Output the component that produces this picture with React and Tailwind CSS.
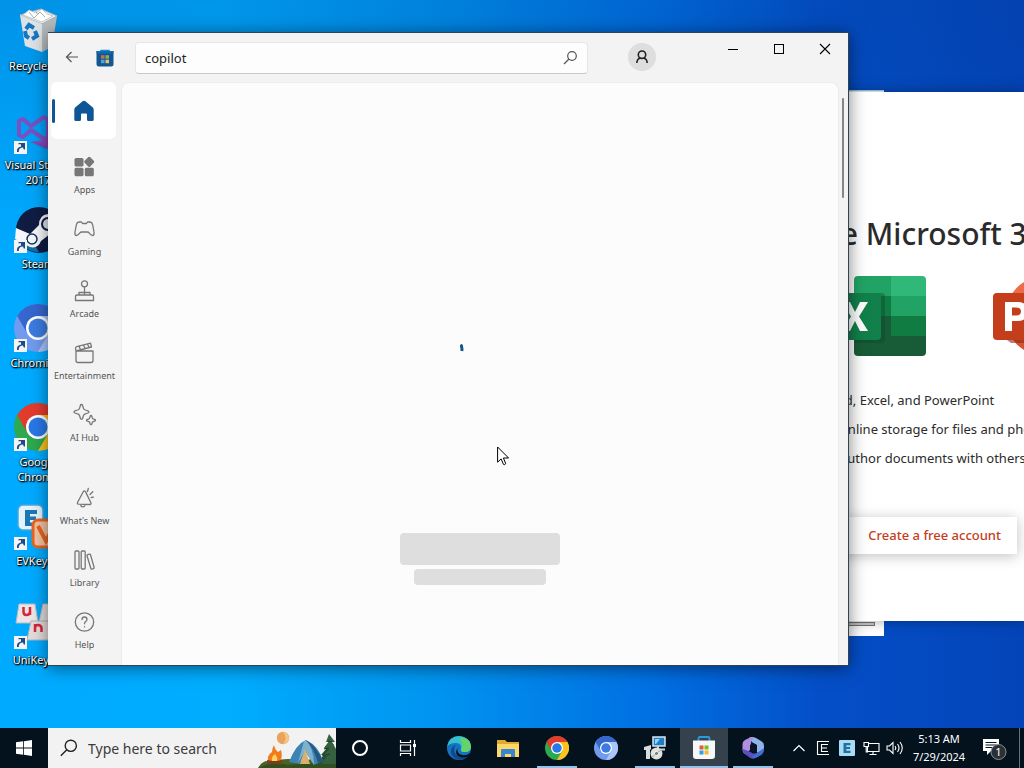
import React from "react";

const noto = "font-['Noto_Sans','Open_Sans',sans-serif]";

/* ---------- Desktop icons ---------- */

function Shortcut() {
  return (
    <svg className="absolute bottom-0 left-0 size-[13px]" viewBox="0 0 13 13" aria-hidden="true">
      <rect width="13" height="13" fill="#f4f4f4" />
      <path d="M3 11C2.600 8 4 6 7 5.500V3.200H4.500V2H11v6.500H9.800L9 6.500C6 6.500 4.500 8 4.800 11z" fill="#1c4a8c" />
    </svg>
  );
}

function RecycleArt() {
  return (
    <svg viewBox="0 0 48 48" className="size-12">
      <path d="M6 8l21-6 16 7-15 8z" fill="#eef1f3" stroke="#a9b0b5" />
      <path d="M6 8l22 9v28L11 39z" fill="#dfe2e4" />
      <path d="M28 17l15-8-5 31-10 5z" fill="#b5babd" />
      <path d="M9 8l6-5 7 3 6-4 5 5 6 2-11 6z" fill="#fff" stroke="#b8bec2" strokeWidth=".8" />
      <path d="M15 5l5 6 6-6 5 5M21 3l3 5" stroke="#a9aeb3" fill="none" />
      <g fill="none" stroke="#1676c6" strokeWidth="4">
        <path d="M12 22l3-4 5 3" />
        <path d="M21 24l2 5-5 3" />
        <path d="M15 31l-3-2-1-5" />
      </g>
    </svg>
  );
}

function VisualStudioArt() {
  return (
    <svg viewBox="0 0 48 48" className="size-12">
      <path d="M34 8l9 3v28l-11 4-15-7 15 1z" fill="#7a3dac" opacity=".8" />
      <path d="M5 15l4-2 8 7 13-9 4 3v16l-4 3-13-9-8 7-4-2z" fill="none" stroke="#8f42b8" strokeWidth="4" strokeLinejoin="round" opacity=".85" />
      <path d="M16 36l20-3v8z" fill="#9b3cb5" opacity=".8" />
    </svg>
  );
}

function SteamArt() {
  return (
    <svg viewBox="0 0 48 48" className="size-12">
      <circle cx="25" cy="25" r="23" fill="#101c42" />
      <path d="M2 27q12 1 23 20-18 0-23-20z" fill="#1470a7" />
      <path d="M2 23l14 6 9-9q0-10 9-11a10 10 0 0 1 2 20l-9 7q-3 8-11 6L1 34z" fill="#f5f7fa" />
      <circle cx="34" cy="19" r="7" fill="#101c42" />
      <circle cx="34" cy="19" r="5" fill="#dfe5ec" />
      <circle cx="18" cy="34" r="5" fill="none" stroke="#15345d" strokeWidth="1.500" />
    </svg>
  );
}

function ChromeArt({ blue = false, className = "size-12" }) {
  const top = blue ? "#3567cf" : "#e33b2e";
  const left = blue ? "#719bee" : "#2da94f";
  const right = blue ? "#a9c6fb" : "#fcc31e";
  return (
    <svg viewBox="0 0 48 48" className={className} aria-hidden="true">
      <circle cx="24" cy="24" r="24" fill={left} />
      <path d="M3.200 12A24 24 0 0 1 44.800 12H24L13.600 30z" fill={top} />
      <path d="M44.800 12A24 24 0 0 1 24 48L34.400 30 24 12z" fill={right} />
      <circle cx="24" cy="24" r="12" fill="#fff" />
      <circle cx="24" cy="24" r="9.500" fill={blue ? "#3c7be0" : "#2978e8"} />
    </svg>
  );
}

function EvkeyArt() {
  return (
    <svg viewBox="0 0 48 48" className="size-12">
      <rect x="4" y="3" width="25" height="25" rx="5" fill="#e2f3fc" stroke="#4aa6dc" strokeWidth="1.500" />
      <path d="M11 8h12v4h-7v2.500h6v3.500h-6v2.500h7V24H11z" fill="#1c77b5" />
      <rect x="19" y="18" width="27" height="27" rx="5" fill="#f4c3a3" stroke="#e8651e" strokeWidth="3" />
      <path d="M24 24l8 15 8-15" fill="none" stroke="#e8651e" strokeWidth="4" />
    </svg>
  );
}

function UnikeyArt() {
  return (
    <svg viewBox="0 0 48 48" className="size-12">
      <path d="M5 3h16l3 19H2z" fill="#ece6e6" stroke="#bdbabd" />
      <path d="M29 3h14l3 19H25z" fill="#e2dcdc" stroke="#bdbabd" />
      <path d="M17 20h17l4 19H13z" fill="#e3dcdc" stroke="#b5b0b3" />
      <path d="M9.500 6v5q0 3 3 3t3.500-3V6M16 6v8" fill="none" stroke="#d92538" strokeWidth="2.500" />
      <path d="M21 31v-8M21 27q0-3 3-3t3.500 3v4" fill="none" stroke="#d92538" strokeWidth="2.500" />
    </svg>
  );
}

const desktopItems = [
  { label: "Recycle Bin", art: <RecycleArt />, shortcut: false },
  { label: "Visual Studio 2017", art: <VisualStudioArt />, shortcut: true },
  { label: "Steam", art: <SteamArt />, shortcut: true },
  { label: "Chromium", art: <ChromeArt blue />, shortcut: true },
  { label: "Google Chrome", art: <ChromeArt />, shortcut: true },
  { label: "EVKey64", art: <EvkeyArt />, shortcut: true },
  { label: "UniKeyNT", art: <UnikeyArt />, shortcut: true },
];

function DesktopIcons() {
  return (
    <ul className="flex w-[76px] flex-col pt-[7px]">
      {desktopItems.map((item) => (
        <li key={item.label} className="h-[99px]">
          <button className="flex w-full flex-col items-center gap-[3px]">
            <span className="relative block size-12">
              {item.art}
              {item.shortcut && <Shortcut />}
            </span>
            <span className="text-center text-[11px] leading-[15px] text-white [text-shadow:1px_1px_2px_#000,0_0_2px_#000,1px_1px_1px_#000]">
              {item.label}
            </span>
          </button>
        </li>
      ))}
    </ul>
  );
}

/* ---------- Microsoft 365 window ---------- */

function ExcelLogo() {
  return (
    <svg viewBox="0 0 92 80" className="h-20 w-[92px] shrink-0" role="img" aria-label="Excel">
      <defs>
        <clipPath id="sheet"><rect x="20" width="72" height="80" rx="4" /></clipPath>
      </defs>
      <g clipPath="url(#sheet)">
        <rect x="20" width="37" height="20" fill="#21a366" />
        <rect x="57" width="35" height="20" fill="#2fb878" />
        <rect x="20" y="20" width="37" height="20" fill="#107c41" />
        <rect x="57" y="20" width="35" height="20" fill="#21a366" />
        <rect x="20" y="40" width="37" height="40" fill="#185c37" />
        <rect x="57" y="40" width="35" height="20" fill="#107c41" />
        <rect x="57" y="60" width="35" height="20" fill="#185c37" />
        <path d="M20 17h28q3 0 3 3v43q0 4-4 4H20z" fill="#0b4327" opacity=".35" />
      </g>
      <rect y="17" width="47" height="47" rx="4" fill="#12804a" />
      <path d="M8 26h8l5 10 5-10h8L25 40.500 34 55h-8l-5-10-5 10H8l9-14.500z" fill="#fff" />
    </svg>
  );
}

function PowerPointLogo() {
  return (
    <svg viewBox="0 0 92 80" className="h-20 w-[92px] shrink-0" role="img" aria-label="PowerPoint">
      <path d="M52 0a40 40 0 0 0-40 40h40z" fill="#ed6c47" />
      <path d="M52 0a40 40 0 0 1 40 40H52z" fill="#ff8f6b" />
      <path d="M12 40a40 40 0 0 0 80 0z" fill="#d35230" />
      <path d="M14 64h30q5-1 5-5V20h3v42q0 5-5 5H18z" fill="#8f2c12" opacity=".6" />
      <rect y="17" width="47" height="47" rx="4" fill="#c43e1c" />
      <path fillRule="evenodd" d="M12 26h12q11 0 11 9.500T24 45h-5v10h-7zm7 5.500v8h4q5 0 5-4t-5-4z" fill="#fff" />
    </svg>
  );
}

function OfficeWindow() {
  return (
    <section className="absolute top-[92px] right-0 bottom-[107px] flex w-[204px] flex-col overflow-hidden bg-white text-[#2b2b2b] shadow-[0_0_12px_rgba(0,0,0,0.35)]">
      <h1 className="mt-[122px] pl-0.5 text-[30px] leading-10 font-medium whitespace-nowrap">
        ne Microsoft 365
      </h1>
      <div className="mt-[22px] flex gap-[67px] pl-[14px]">
        <ExcelLogo />
        <PowerPointLogo />
      </div>
      <ul className="mt-[30px] text-[13px] leading-[29px] whitespace-nowrap">
        <li>Word, Excel, and PowerPoint</li>
        <li className="pl-5">online storage for files and photos</li>
        <li className="pl-5">author documents with others</li>
      </ul>
      <button className="mt-11 mr-[7px] h-[37px] shrink-0 bg-white pr-4 text-right text-[13px] font-medium text-[#c43e1c] shadow-[0_2px_14px_rgba(0,0,0,0.25)]">
        Create a free account
      </button>
    </section>
  );
}

/* ---------- Store window ---------- */

function NavSvg({ children }) {
  return (
    <svg viewBox="0 0 24 24" className="size-6" fill="none" stroke="#777" strokeWidth="1.300" strokeLinejoin="round" strokeLinecap="round" aria-hidden="true">
      {children}
    </svg>
  );
}

const topNav = [
  {
    label: "Apps",
    icon: (
      <NavSvg>
        <g fill="#777" stroke="none">
          <rect x="1.500" y="3" width="9" height="8.500" rx="1.500" />
          <rect x="1.500" y="12.800" width="9" height="8.500" rx="1.500" />
          <rect x="11.800" y="12.800" width="9" height="8.500" rx="1.500" />
          <rect x="12.200" y="2.800" width="8" height="8" rx="1.500" transform="rotate(45 16.200 6.800)" />
        </g>
      </NavSvg>
    ),
  },
  {
    label: "Gaming",
    icon: (
      <NavSvg>
        <path d="M6.200 5h2.300l1 1.500h4l1-1.500h2.300q2.200.2 2.800 2.500L21 15q.4 3.500-1.500 3.500-1.400 0-3.400-2.700-.6-.8-1.700-.8H8.600q-1.100 0-1.700.8-2 2.700-3.400 2.700Q1.600 18.500 2 15l1.400-7.500Q4 5.200 6.200 5z" />
      </NavSvg>
    ),
  },
  {
    label: "Arcade",
    icon: (
      <NavSvg>
        <circle cx="11.500" cy="4.800" r="3" />
        <path d="M11.500 7.800v8M6 16v-2.500h11V16M4 16h15q1.500 0 1.500 1.500V21.500h-18v-4Q2.500 16 4 16z" />
      </NavSvg>
    ),
  },
  {
    label: "Entertainment",
    icon: (
      <NavSvg>
        <path d="M3 10h17v9.500q0 2-2 2H5q-2 0-2-2zM3 10l-.5-2.400q-.2-1.600 1.300-2L17.500 2.200l1 3.800L3 10M6 5l1.500 3.700M10.500 4L12 7.500M14.500 3L16 6.500" />
      </NavSvg>
    ),
  },
  {
    label: "AI Hub",
    icon: (
      <NavSvg>
        <path d="M8.500 1.500q.8 0 1.100 1l.8 2.600q.5 1.400 1.900 1.900l2.600.8q1 .4 1 1.100t-1 1.100l-2.600.8q-1.400.5-1.900 1.900l-.8 2.600q-.3 1-1.100 1t-1.100-1l-.8-2.600q-.5-1.400-1.900-1.900L2 10q-1-.4-1-1.100t1-1.100L4.700 7q1.400-.5 1.900-1.900l.8-2.600q.3-1 1.100-1z" />
        <path d="M18 12.500q.6 0 .9 1l.4 1.400q.2.600.8.900l1.500.5q.9.300.9.900t-.9.900l-1.500.5q-.6.200-.8.900l-.4 1.400q-.3 1-.9 1t-.9-1l-.4-1.400q-.2-.6-.8-.9l-1.500-.5q-.9-.3-.9-.9t.9-.9l1.500-.5q.6-.2.8-.9l.4-1.400q.3-1 .9-1z" />
      </NavSvg>
    ),
  },
];

const bottomNav = [
  {
    label: "What's New",
    icon: (
      <NavSvg>
        <path d="M10.500 5.300L4.500 16.500q-.5 1.500 1 1.700l11.500.3q1.500-.4.900-1.700L12.500 5.600q-1-1.200-2-.3zM7.500 18.300q.3 2.600 2.300 2.600t2.600-2.500M14.500 5.500l.8-3M17 8.500l2.800-2.800M18.200 11.500l2.300-.3" />
      </NavSvg>
    ),
  },
  {
    label: "Library",
    icon: (
      <NavSvg>
        <rect x="2" y="3" width="4" height="18" rx="1" />
        <rect x="8.200" y="3" width="4" height="18" rx="1" />
        <path d="M14 7.800q-.2-.9.600-1.200l1.800-.5q.8-.2 1.100.6l3.600 12.700q.2.900-.6 1.200l-1.500.4q-.9.200-1.200-.7z" />
      </NavSvg>
    ),
  },
  {
    label: "Help",
    icon: (
      <NavSvg>
        <circle cx="11.500" cy="12" r="9.200" />
        <path d="M9 9.500Q9 7 11.500 7T14 9.300q0 1.300-1.300 2.300t-1.200 2.200M11.500 16.700v.2" />
      </NavSvg>
    ),
  },
];

function NavItem({ label, icon }) {
  return (
    <button className="flex h-[62px] w-full shrink-0 flex-col items-center justify-center gap-[5px] pb-px text-[9px] leading-3 whitespace-nowrap text-[#555]">
      {icon}
      {label}
    </button>
  );
}

function StoreBag() {
  return (
    <svg viewBox="0 0 20 20" className="size-5" aria-hidden="true">
      <path d="M6 4V2.500h8V4" fill="none" stroke="#1b8bd0" strokeWidth="1.500" />
      <path d="M1.500 3h17v13q0 2.500-2.500 2.500H4q-2.500 0-2.500-2.500z" fill="#14568f" />
      <path d="M1.500 3h17v2.500h-17z" fill="#0f6cae" />
      <path d="M6 7.200h3.500v3.500H6z" fill="#c3704a" />
      <path d="M10.500 7.200H14v3.500h-3.500z" fill="#93a866" />
      <path d="M6 11.700h3.500v3.500H6z" fill="#4ba6da" />
      <path d="M10.500 11.700H14v3.500h-3.500z" fill="#eebf62" />
    </svg>
  );
}

function StoreHeader() {
  return (
    <header className="flex h-[49px] shrink-0 items-start">
      <button aria-label="Back" className="mt-3 ml-3 flex size-6 items-center justify-center">
        <svg viewBox="0 0 14 14" className="size-3.5" fill="none" stroke="#555" strokeWidth="1.200">
          <path d="M13 7H1.500M6.500 2l-5 5 5 5" />
        </svg>
      </button>
      <span className="mt-[15px] ml-[11px]"><StoreBag /></span>
      <form className="mt-[9px] ml-5 flex h-8 max-w-[453px] flex-1 items-center rounded-sm border border-[#e6e6e6] border-b-[#c9c9c9] bg-[#fdfdfd]" onSubmit={(e) => e.preventDefault()}>
        <input
          aria-label="Search the Store"
          defaultValue="copilot"
          className="h-full min-w-0 flex-1 bg-transparent px-[9px] text-[13px] text-[#1f1f1f] outline-none"
        />
        <button aria-label="Search" className="mr-[7px] flex size-5 items-center justify-center">
          <svg viewBox="0 0 16 16" className="size-4" fill="none" stroke="#555" strokeWidth="1.200">
            <circle cx="10" cy="6" r="4.300" />
            <path d="M7 9l-5 5" />
          </svg>
        </button>
      </form>
      <button aria-label="Account" className="mt-[10px] ml-10 flex size-7 items-center justify-center rounded-full bg-[#dedede]">
        <svg viewBox="0 0 16 16" className="size-4" fill="none" stroke="#222" strokeWidth="1.600">
          <circle cx="8" cy="5.700" r="3.700" />
          <path d="M2.800 14q.3-4.500 3.800-5M13.200 14q-.3-4.500-3.800-5" />
        </svg>
      </button>
      <div className="ml-auto flex text-black">
        <button aria-label="Minimize" className="flex h-8 w-[46px] items-center justify-center">
          <span className="h-px w-[10px] bg-black" />
        </button>
        <button aria-label="Maximize" className="flex h-8 w-[46px] items-center justify-center">
          <span className="size-[10px] border border-black" />
        </button>
        <button aria-label="Close" className="flex h-8 w-[46px] items-center justify-center">
          <svg viewBox="0 0 12 12" className="size-3" stroke="#000" strokeWidth="1.100">
            <path d="M1 1l10 10M11 1L1 11" />
          </svg>
        </button>
      </div>
    </header>
  );
}

function StoreWindow() {
  return (
    <section className="absolute top-8 right-[175px] bottom-[62px] left-12 flex flex-col border border-l-0 border-[#33424f] bg-[#f3f3f3] shadow-[0_2px_16px_rgba(0,0,0,0.5)]">
      <StoreHeader />
      <div className="flex min-h-0 flex-1">
        <nav className="flex w-[73px] shrink-0 flex-col pb-[3px]">
          <button aria-label="Home" className="mb-[6px] ml-[3px] flex h-[57px] w-[65px] shrink-0 items-center rounded-md bg-white">
            <span className="ml-px h-6 w-[3px] rounded-full bg-[#0f5696]" />
            <svg viewBox="0 0 24 24" className="ml-[17px] size-6" aria-hidden="true">
              <path d="M10.600 2.200q1.400-1.100 2.800 0l7.200 6q1.100 1 1.100 2.300v10q0 1.500-1.500 1.500h-3.700q-1.500 0-1.500-1.500v-5q0-1-1-1h-4q-1 0-1 1v5Q9 22 7.500 22H3.800q-1.500 0-1.500-1.500v-10q0-1.300 1.100-2.300z" fill="#0f5696" />
            </svg>
          </button>
          {topNav.map((item) => <NavItem key={item.label} {...item} />)}
          <div className="mt-auto">
            {bottomNav.map((item) => <NavItem key={item.label} {...item} />)}
          </div>
        </nav>
        <main className="flex flex-1 flex-col items-center rounded-t-lg border border-b-0 border-[#ededed] bg-[#fcfcfc] pt-[245px]">
          <svg viewBox="0 0 40 40" className="size-10" role="img" aria-label="Loading">
            <path d="M.8 16.600q1.600 2.800 1 6.400" fill="none" stroke="#15568a" strokeWidth="3" />
          </svg>
          <div className="mt-[165px] h-8 w-40 rounded bg-[#dedede]" />
          <div className="mt-1 h-4 w-[132px] rounded-sm bg-[#dedede]" />
        </main>
        <div className="flex w-[9px] shrink-0 justify-end pt-4 pr-1">
          <div className="h-[100px] w-0.5 rounded-full bg-[#858585]" />
        </div>
      </div>
    </section>
  );
}

/* ---------- Taskbar ---------- */

function CampArt() {
  return (
    <svg viewBox="0 0 78 40" className="h-10 w-[78px] shrink-0" aria-hidden="true">
      <circle cx="25" cy="10" r="6.200" fill="#e9a35d" />
      <path d="M25 4a6 6 0 0 1 0 12q5-6 0-12z" fill="#f5c58a" />
      <path d="M0 40q4-9 16-7 14-4 28 0 18-5 34-2v9z" fill="#486323" />
      <path d="M0 40q14-7 30-3 23-3 48-1v4z" fill="#31501d" />
      <path d="M60 34l6-7h-3l6-7h-3l6-8 4 5v19H60z" fill="#254c2c" />
      <path d="M71 6l6 8h-3l4 7v15H63l6-8h-4l6-7h-5l5-7h-3z" fill="#356140" />
      <path d="M66 21l5-1M64 28l8-2M70 13l4 1" stroke="#1c3c22" />
      <path d="M48 12Q38 16 31 34l11 2 5-13 9 14 9-4Q61 18 48 12z" fill="#3e83b5" />
      <path d="M46 13l-6 22 7-12 9 14q0-16-8-25z" fill="#7eb1cb" />
      <path d="M47 21l-5 15h10z" fill="#d9b16c" />
      <path d="M48 12q10 6 17 21l-5 2q-4-15-12-23z" fill="#23577f" />
      <path d="M10 33q-1-6 4-9 0-4 2-7 1 5 4 7l3-2q2 7-1 11z" fill="#f07b1b" />
      <path d="M14 33q-1-4 3-7 3 4 2 7z" fill="#ffd25c" />
      <path d="M9 33l15 3M24 33L9 36" stroke="#754020" strokeWidth="2" />
    </svg>
  );
}

const taskApps = [
  {
    label: "Microsoft Edge",
    open: false,
    icon: (
      <svg viewBox="0 0 24 24" className="size-6">
        <circle cx="12" cy="12" r="12" fill="#1474c4" />
        <path d="M0 11Q2 0 12 0q11 1 12 10 0 6-7 6-4 0-3-3 1-6-5-6-7 0-9 4z" fill="#35bfd0" />
        <path d="M14 1q10 2 10 10 0 5-6 5-4 0-4-2 3-6-1-10z" fill="#66d36a" />
        <path d="M9 9q-3 3-1 8 4 6 13 3-4 5-11 3.500Q3 20 4 14q1-4 5-5z" fill="#114a8b" />
        <path d="M12.500 10.500q-2.500 1.500-2 4.500 1 4 6 4.200 4 0 6.500-2.200l-1 2.500-2 1.500q-6 1.500-9.500-1.500-4-4 2-9z" fill="#06131c" />
      </svg>
    ),
  },
  {
    label: "File Explorer",
    open: false,
    icon: (
      <svg viewBox="0 0 24 24" className="size-6">
        <path d="M1 4h8l2 2h12v15H1z" fill="#e3ab2e" />
        <path d="M1 8h22v13H1z" fill="#fbd968" />
        <path d="M5 14q0-1 1-1h12q1 0 1 1v7h-4v-3H9v3H5z" fill="#3b84d0" />
      </svg>
    ),
  },
  { label: "Google Chrome", open: true, icon: <ChromeArt className="size-6" /> },
  { label: "Chromium", open: false, icon: <ChromeArt blue className="size-6" /> },
  {
    label: "Setup",
    open: true,
    icon: (
      <svg viewBox="0 0 24 24" className="size-6">
        <rect x="10" y="1" width="12" height="9" fill="#1c7fc8" stroke="#dfe6ea" strokeWidth="1.500" />
        <path d="M12 3h5l-4 5h-1z" fill="#8fd2fa" />
        <path d="M15 10v3M11 13.500h11" stroke="#cfd6da" strokeWidth="2" />
        <path d="M1 11l7-2v4l-1 1v9H3v-9H1z" fill="#d9dcde" />
        <circle cx="13.500" cy="17.500" r="6" fill="#dfe2df" />
        <circle cx="13.500" cy="17.500" r="2" fill="#63757d" stroke="#fff" />
        <path d="M13.500 17l5-3M13.500 18l-5 3" stroke="#9fb59c" />
      </svg>
    ),
  },
  {
    label: "Microsoft Store",
    open: true,
    active: true,
    icon: (
      <svg viewBox="0 0 24 24" className="size-6">
        <path d="M6.500 6V2.500Q6.500 1 8 1h8q1.500 0 1.500 1.500V6" fill="none" stroke="#2c9bdd" strokeWidth="1.800" />
        <path d="M1 4.500h22V20q0 3-3 3H4q-3 0-3-3z" fill="#f5f7f8" />
        <path d="M7.500 9.500h4v4h-4z" fill="#e45b39" />
        <path d="M12.500 9.500h4v4h-4z" fill="#7fba27" />
        <path d="M7.500 14.500h4v4h-4z" fill="#29a4df" />
        <path d="M12.500 14.500h4v4h-4z" fill="#f7b82a" />
      </svg>
    ),
  },
  {
    label: "Microsoft 365",
    open: true,
    icon: (
      <svg viewBox="0 0 24 24" className="size-6">
        <path d="M8 2q3-2 7 0l5 3q3 1.500 3 5v5l-7 2V11q0-3-4-4z" fill="#8fb4ea" />
        <path d="M8 2q3-2 5 0-3 2-3 6l-1 6-5 4q-2-1-2.500-4V8q0-2.500 2.500-4z" fill="#b18fe0" />
        <path d="M1.500 13q.5 4 3.500 6l4.500 3q3 1.500 6-.5l4.500-2.500q3-2 3-6l-7.500 4q-3 1.500-6-1L6 14.500Q3 13 1.500 13z" fill="#5a4fc0" />
        <path d="M23 12q0 5-3 7l-4.500 2.500q-3 1.500-5 0l6-4.500z" fill="#3f6fd0" />
        <path d="M9 9l3-2 4 2v5l-4 2-3-2z" fill="#0b1528" />
      </svg>
    ),
  },
];

function TaskButton({ label, icon, open, active }) {
  return (
    <button
      aria-label={label}
      className={`relative flex w-12 items-center justify-center ${active ? "bg-[#35414d]" : ""}`}
    >
      {icon}
      {open && (
        <span className={`absolute bottom-0 left-1/2 h-0.5 -translate-x-1/2 bg-[#8cc4ee] ${active ? "w-12" : "w-10"}`} />
      )}
    </button>
  );
}

function Taskbar() {
  return (
    <footer className="flex h-10 shrink-0 bg-[#04121e] text-white">
      <button aria-label="Start" className="flex w-12 shrink-0 items-center justify-center">
        <svg viewBox="0 0 16 16" className="size-4" fill="#fff">
          <path d="M0 2.300L7.200 1.300v6.300H0zM8 1.200L16 0v7.600H8zM0 8.400h7.200v6.300L0 13.700zM8 8.400h8V16l-8-1.200z" />
        </svg>
      </button>
      <label className="flex w-72 shrink-0 items-center bg-[#f2f2f2]">
        <svg viewBox="0 0 18 18" className="ml-3 size-[18px] shrink-0" fill="none" stroke="#222" strokeWidth="1.400">
          <circle cx="10.800" cy="6.800" r="5.600" />
          <path d="M6.800 10.800L.8 16.800" />
        </svg>
        <input
          aria-label="Type here to search"
          placeholder="Type here to search"
          className="h-full min-w-0 flex-1 bg-transparent pl-[10px] text-[14px] outline-none placeholder:text-[#3b3b3b] placeholder:opacity-100"
        />
        <CampArt />
      </label>
      <button aria-label="Cortana" className="flex w-12 items-center justify-center">
        <span className="size-4 rounded-full border-2 border-white" />
      </button>
      <button aria-label="Task View" className="mr-[3px] flex w-12 items-center justify-center">
        <svg viewBox="0 0 18 16" className="h-4 w-[18px]" fill="none" stroke="#fff" strokeWidth="1.200">
          <path d="M1.500 0v2.500h10V0M1.500 5h10v6h-10zM1.500 16v-2.500h10V16M15.500 0v16" />
          <path d="M14 4h3v3h-3z" fill="#fff" stroke="none" />
        </svg>
      </button>
      <div className="flex gap-px">
        {taskApps.map((app) => <TaskButton key={app.label} {...app} />)}
      </div>
      <div className="ml-auto flex shrink-0 items-center">
        <button aria-label="Show hidden icons" className="flex w-6 justify-center">
          <svg viewBox="0 0 12 8" className="h-2 w-3" fill="none" stroke="#fff" strokeWidth="1.200"><path d="M.5 7L6 1.500 11.500 7" /></svg>
        </button>
        <button aria-label="Keyboard" className="flex w-6 justify-center">
          <svg viewBox="0 0 14 16" className="h-4 w-3.5" fill="none" stroke="#fff" strokeWidth="1.100"><path d="M13 1.500H1.500v13H13M12 4.500H5.500v7H12M5.500 8H11" /></svg>
        </button>
        <button aria-label="EVKey" className="flex w-6 justify-center">
          <svg viewBox="0 0 16 16" className="size-4"><rect width="16" height="16" rx="1" fill="#a8dcf5" /><path d="M4.500 3h7v2.300H7.300V7H11v2H7.300v1.700h4.200V13h-7z" fill="#236f9d" /></svg>
        </button>
        <button aria-label="Network" className="flex w-6 justify-center">
          <svg viewBox="0 0 17 16" className="h-4 w-[17px]" fill="none" stroke="#fff" strokeWidth="1.100"><path d="M6 3.500h10v8H4.500V7M10 11.500V14M6.500 14.500h7M1 2.500h4.500v4H1zM3.200 6.500V12H5" /></svg>
        </button>
        <button aria-label="Volume" className="flex w-6 justify-center">
          <svg viewBox="0 0 18 16" className="h-4 w-[18px]" fill="none" stroke="#fff" strokeWidth="1.100"><path d="M1 6h2.500L7 2.500v11L3.500 10H1zM9 6q1.500 2 0 4M11.500 4q3 4 0 8M14 2q4.500 6 0 12" /></svg>
        </button>
        <button className="flex w-16 flex-col items-center text-[11px] leading-[18px]">
          <span>5:13 AM</span>
          <span>7/29/2024</span>
        </button>
        <button aria-label="Notifications" className="flex w-12 justify-center">
          <svg viewBox="0 0 24 24" className="size-6" aria-hidden="true">
            <path d="M0 3h16v12H8l-4 4v-4H0z" fill="#fff" />
            <path d="M2.500 6.500h11M2.500 9h11M2.500 11.500h8" stroke="#04121e" />
            <circle cx="15.500" cy="16" r="7.500" fill="#2a3136" stroke="#8b9094" />
            <text x="15.500" y="20" fontSize="11" textAnchor="middle" fill="#fff">1</text>
          </svg>
        </button>
        <button aria-label="Show desktop" className="h-10 w-[5px] border-l border-[#65717a]" />
      </div>
    </footer>
  );
}

export default function App() {
  return (
    <div className={`flex h-screen flex-col overflow-hidden ${noto}`}>
      <div className="relative min-h-0 flex-1 overflow-hidden bg-[linear-gradient(to_bottom,rgba(0,55,140,0.2),transparent_35%),linear-gradient(to_right,#00aaff_0%,#00adff_22%,#0095f0_42%,#006fe2_64%,#044fc8_80%,#0444b8_100%)]">
        <DesktopIcons />
        <div className="absolute top-[90px] right-[140px] bottom-[92px] w-[200px] border-t border-[#9ed3ee] bg-white">
          <div className="absolute right-[9px] bottom-[10px] left-0 h-1 border border-[#777] bg-[#ccc]" />
        </div>
        <OfficeWindow />
        <StoreWindow />
        <svg viewBox="0 0 13 20" className="absolute top-[446px] left-[497px] h-5 w-[13px]" aria-hidden="true">
          <path d="M.6 1v15.200l3.500-3.300 2.300 5.400q.5.700 1.400.3t.8-1.300L6.400 12h5.200z" fill="#fff" stroke="#000" />
        </svg>
      </div>
      <Taskbar />
    </div>
  );
}
